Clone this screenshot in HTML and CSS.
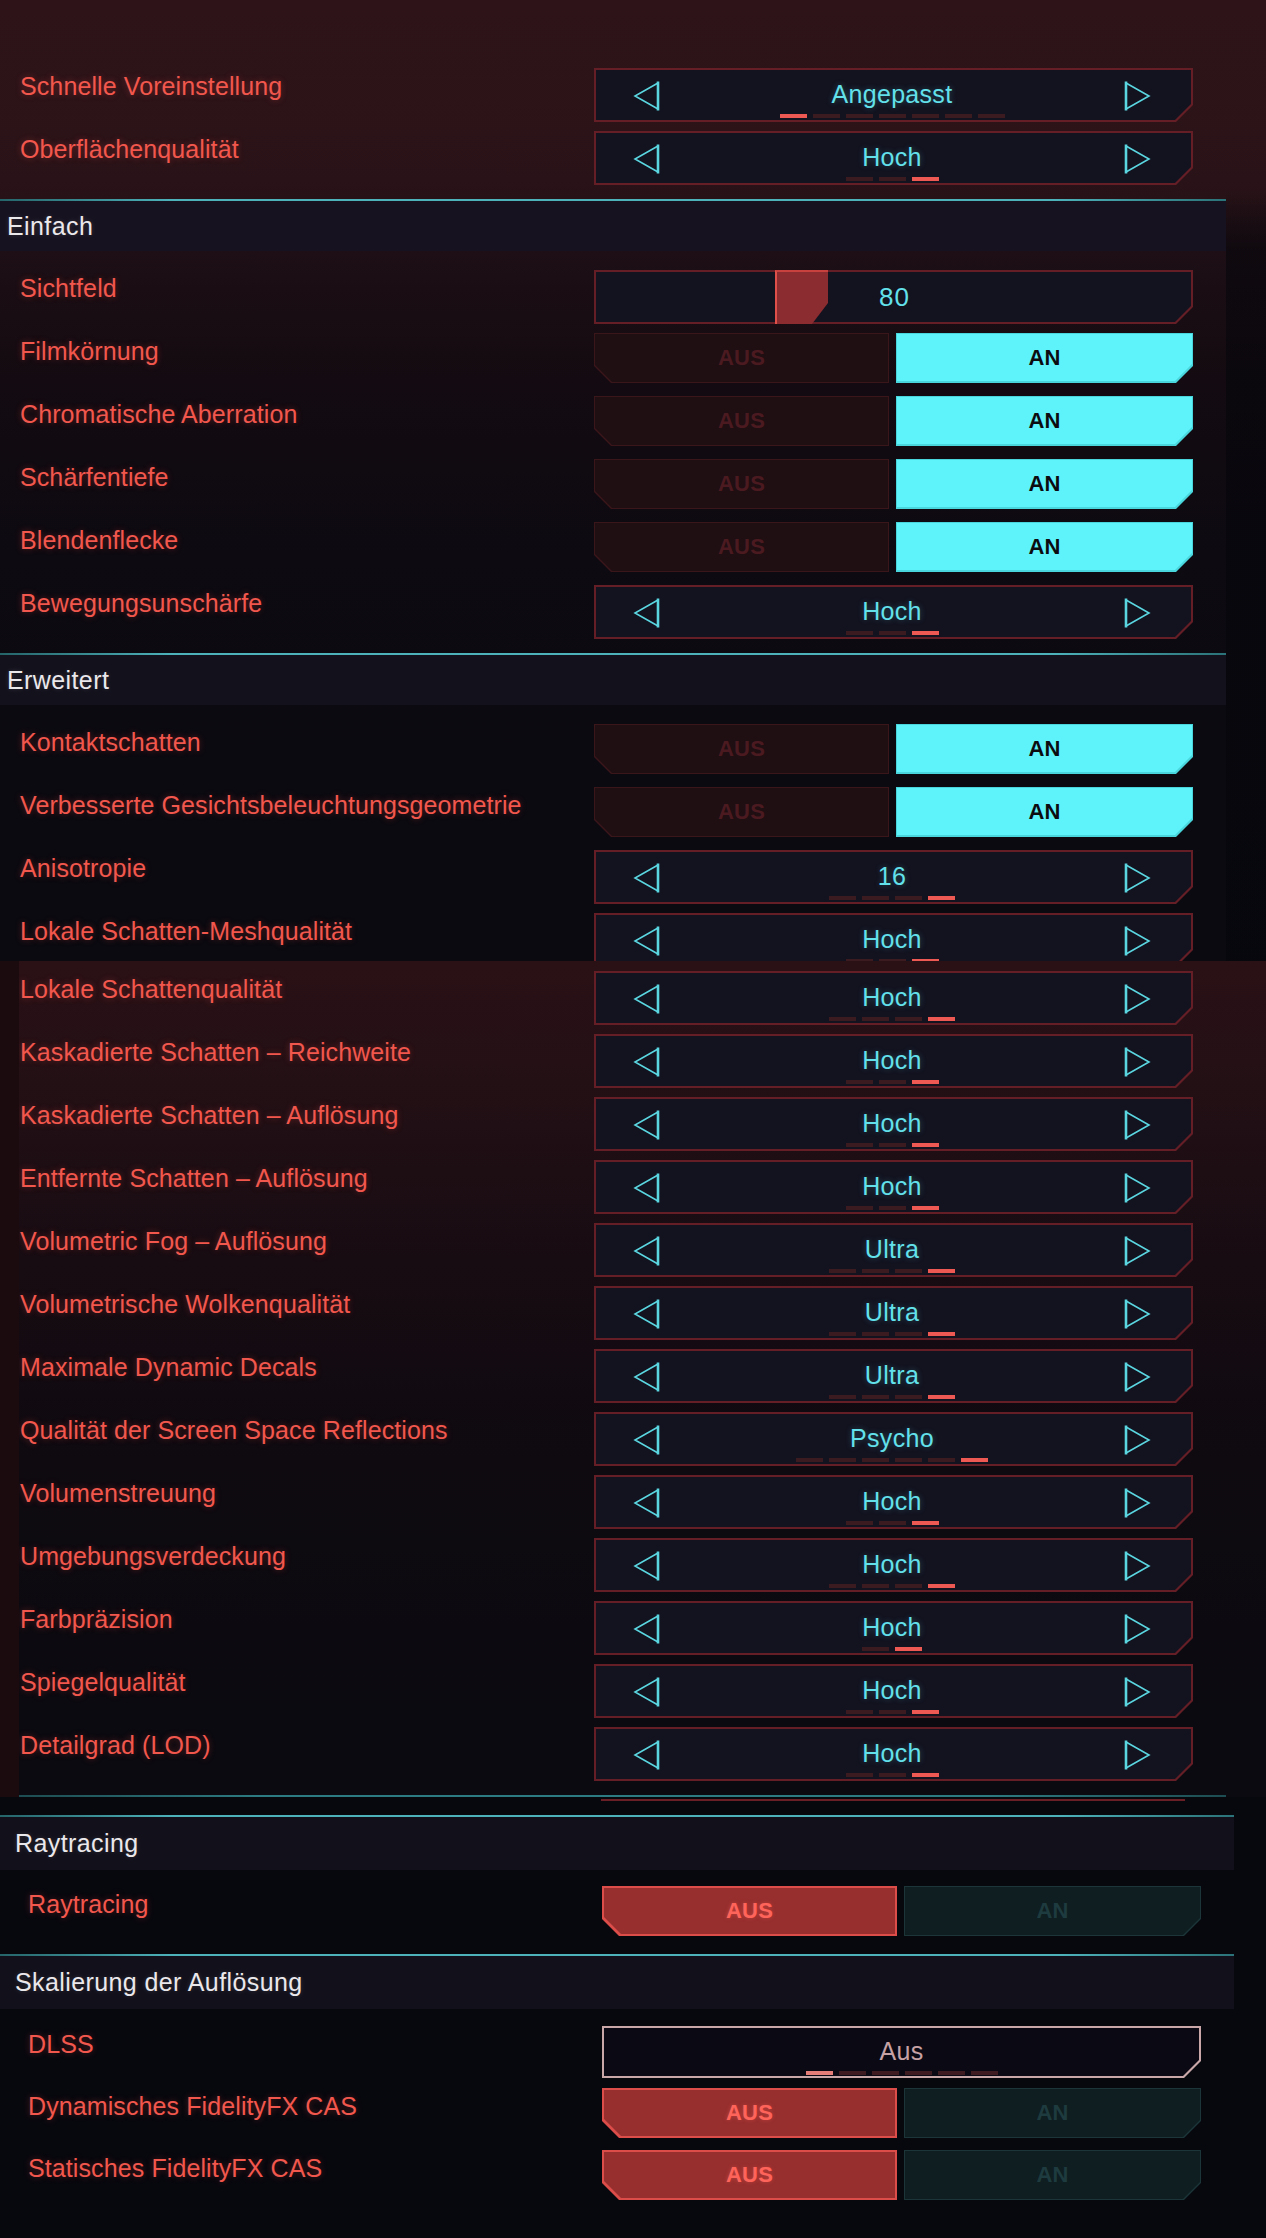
FILE: index.html
```html
<!DOCTYPE html>
<html lang="de">
<head>
<meta charset="utf-8">
<title>Grafik</title>
<link rel="stylesheet" href="styles.css">
</head>
<body>
<div class="screen">

<section class="part part-top">
  <div class="rows rows-first">
    <div class="row">
      <div class="lbl">Schnelle Voreinstellung</div>
      <div class="ctl sel">
        <svg class="arr arr-l" width="27" height="30" viewBox="0 0 27 30"><path d="M25 2 L2 15 L25 28" /><path class="bar" d="M25 0.5 V29.5" /></svg>
        <div class="val"><div class="txt">Angepasst</div><div class="dots"><i class="on"></i><i></i><i></i><i></i><i></i><i></i><i></i></div></div>
        <svg class="arr arr-r" width="27" height="30" viewBox="0 0 27 30"><path d="M2 2 L25 15 L2 28" /><path class="bar" d="M2 0.5 V29.5" /></svg>
      </div>
    </div>
    <div class="row">
      <div class="lbl">Oberflächenqualität</div>
      <div class="ctl sel">
        <svg class="arr arr-l" width="27" height="30" viewBox="0 0 27 30"><path d="M25 2 L2 15 L25 28" /><path class="bar" d="M25 0.5 V29.5" /></svg>
        <div class="val"><div class="txt">Hoch</div><div class="dots"><i></i><i></i><i class="on"></i></div></div>
        <svg class="arr arr-r" width="27" height="30" viewBox="0 0 27 30"><path d="M2 2 L25 15 L2 28" /><path class="bar" d="M2 0.5 V29.5" /></svg>
      </div>
    </div>
  </div>

  <div class="head head-top"><span>Einfach</span></div>

  <div class="rows rows-sec">
    <div class="row">
      <div class="lbl">Sichtfeld</div>
      <div class="ctl sld">
        <div class="knob" style="left:181px"></div>
        <span class="sv">80</span>
      </div>
    </div>
    <div class="row">
      <div class="lbl">Filmkörnung</div>
      <div class="tog"><div class="t t-l off-red"><span>AUS</span></div><div class="t t-r on-cyan"><span>AN</span></div></div>
    </div>
    <div class="row">
      <div class="lbl">Chromatische Aberration</div>
      <div class="tog"><div class="t t-l off-red"><span>AUS</span></div><div class="t t-r on-cyan"><span>AN</span></div></div>
    </div>
    <div class="row">
      <div class="lbl">Schärfentiefe</div>
      <div class="tog"><div class="t t-l off-red"><span>AUS</span></div><div class="t t-r on-cyan"><span>AN</span></div></div>
    </div>
    <div class="row">
      <div class="lbl">Blendenflecke</div>
      <div class="tog"><div class="t t-l off-red"><span>AUS</span></div><div class="t t-r on-cyan"><span>AN</span></div></div>
    </div>
    <div class="row">
      <div class="lbl">Bewegungsunschärfe</div>
      <div class="ctl sel">
        <svg class="arr arr-l" width="27" height="30" viewBox="0 0 27 30"><path d="M25 2 L2 15 L25 28" /><path class="bar" d="M25 0.5 V29.5" /></svg>
        <div class="val"><div class="txt">Hoch</div><div class="dots"><i></i><i></i><i class="on"></i></div></div>
        <svg class="arr arr-r" width="27" height="30" viewBox="0 0 27 30"><path d="M2 2 L25 15 L2 28" /><path class="bar" d="M2 0.5 V29.5" /></svg>
      </div>
    </div>
  </div>

  <div class="head head-mid"><span>Erweitert</span></div>

  <div class="rows rows-sec">
    <div class="row">
      <div class="lbl">Kontaktschatten</div>
      <div class="tog"><div class="t t-l off-red"><span>AUS</span></div><div class="t t-r on-cyan"><span>AN</span></div></div>
    </div>
    <div class="row">
      <div class="lbl">Verbesserte Gesichtsbeleuchtungsgeometrie</div>
      <div class="tog"><div class="t t-l off-red"><span>AUS</span></div><div class="t t-r on-cyan"><span>AN</span></div></div>
    </div>
    <div class="row">
      <div class="lbl">Anisotropie</div>
      <div class="ctl sel">
        <svg class="arr arr-l" width="27" height="30" viewBox="0 0 27 30"><path d="M25 2 L2 15 L25 28" /><path class="bar" d="M25 0.5 V29.5" /></svg>
        <div class="val"><div class="txt">16</div><div class="dots"><i></i><i></i><i></i><i class="on"></i></div></div>
        <svg class="arr arr-r" width="27" height="30" viewBox="0 0 27 30"><path d="M2 2 L25 15 L2 28" /><path class="bar" d="M2 0.5 V29.5" /></svg>
      </div>
    </div>
    <div class="row">
      <div class="lbl">Lokale Schatten-Meshqualität</div>
      <div class="ctl sel">
        <svg class="arr arr-l" width="27" height="30" viewBox="0 0 27 30"><path d="M25 2 L2 15 L25 28" /><path class="bar" d="M25 0.5 V29.5" /></svg>
        <div class="val"><div class="txt">Hoch</div><div class="dots"><i></i><i></i><i class="on"></i></div></div>
        <svg class="arr arr-r" width="27" height="30" viewBox="0 0 27 30"><path d="M2 2 L25 15 L2 28" /><path class="bar" d="M2 0.5 V29.5" /></svg>
      </div>
    </div>
  </div>
</section>

<section class="part part-mid">
  <div class="rows rows-stitch">
    <div class="row"><div class="lbl">Lokale Schattenqualität</div>
      <div class="ctl sel"><svg class="arr arr-l" width="27" height="30" viewBox="0 0 27 30"><path d="M25 2 L2 15 L25 28" /><path class="bar" d="M25 0.5 V29.5" /></svg>
        <div class="val"><div class="txt">Hoch</div><div class="dots"><i></i><i></i><i></i><i class="on"></i></div></div>
        <svg class="arr arr-r" width="27" height="30" viewBox="0 0 27 30"><path d="M2 2 L25 15 L2 28" /><path class="bar" d="M2 0.5 V29.5" /></svg></div></div>
    <div class="row"><div class="lbl">Kaskadierte Schatten – Reichweite</div>
      <div class="ctl sel"><svg class="arr arr-l" width="27" height="30" viewBox="0 0 27 30"><path d="M25 2 L2 15 L25 28" /><path class="bar" d="M25 0.5 V29.5" /></svg>
        <div class="val"><div class="txt">Hoch</div><div class="dots"><i></i><i></i><i class="on"></i></div></div>
        <svg class="arr arr-r" width="27" height="30" viewBox="0 0 27 30"><path d="M2 2 L25 15 L2 28" /><path class="bar" d="M2 0.5 V29.5" /></svg></div></div>
    <div class="row"><div class="lbl">Kaskadierte Schatten – Auflösung</div>
      <div class="ctl sel"><svg class="arr arr-l" width="27" height="30" viewBox="0 0 27 30"><path d="M25 2 L2 15 L25 28" /><path class="bar" d="M25 0.5 V29.5" /></svg>
        <div class="val"><div class="txt">Hoch</div><div class="dots"><i></i><i></i><i class="on"></i></div></div>
        <svg class="arr arr-r" width="27" height="30" viewBox="0 0 27 30"><path d="M2 2 L25 15 L2 28" /><path class="bar" d="M2 0.5 V29.5" /></svg></div></div>
    <div class="row"><div class="lbl">Entfernte Schatten – Auflösung</div>
      <div class="ctl sel"><svg class="arr arr-l" width="27" height="30" viewBox="0 0 27 30"><path d="M25 2 L2 15 L25 28" /><path class="bar" d="M25 0.5 V29.5" /></svg>
        <div class="val"><div class="txt">Hoch</div><div class="dots"><i></i><i></i><i class="on"></i></div></div>
        <svg class="arr arr-r" width="27" height="30" viewBox="0 0 27 30"><path d="M2 2 L25 15 L2 28" /><path class="bar" d="M2 0.5 V29.5" /></svg></div></div>
    <div class="row"><div class="lbl">Volumetric Fog – Auflösung</div>
      <div class="ctl sel"><svg class="arr arr-l" width="27" height="30" viewBox="0 0 27 30"><path d="M25 2 L2 15 L25 28" /><path class="bar" d="M25 0.5 V29.5" /></svg>
        <div class="val"><div class="txt">Ultra</div><div class="dots"><i></i><i></i><i></i><i class="on"></i></div></div>
        <svg class="arr arr-r" width="27" height="30" viewBox="0 0 27 30"><path d="M2 2 L25 15 L2 28" /><path class="bar" d="M2 0.5 V29.5" /></svg></div></div>
    <div class="row"><div class="lbl">Volumetrische Wolkenqualität</div>
      <div class="ctl sel"><svg class="arr arr-l" width="27" height="30" viewBox="0 0 27 30"><path d="M25 2 L2 15 L25 28" /><path class="bar" d="M25 0.5 V29.5" /></svg>
        <div class="val"><div class="txt">Ultra</div><div class="dots"><i></i><i></i><i></i><i class="on"></i></div></div>
        <svg class="arr arr-r" width="27" height="30" viewBox="0 0 27 30"><path d="M2 2 L25 15 L2 28" /><path class="bar" d="M2 0.5 V29.5" /></svg></div></div>
    <div class="row"><div class="lbl">Maximale Dynamic Decals</div>
      <div class="ctl sel"><svg class="arr arr-l" width="27" height="30" viewBox="0 0 27 30"><path d="M25 2 L2 15 L25 28" /><path class="bar" d="M25 0.5 V29.5" /></svg>
        <div class="val"><div class="txt">Ultra</div><div class="dots"><i></i><i></i><i></i><i class="on"></i></div></div>
        <svg class="arr arr-r" width="27" height="30" viewBox="0 0 27 30"><path d="M2 2 L25 15 L2 28" /><path class="bar" d="M2 0.5 V29.5" /></svg></div></div>
    <div class="row"><div class="lbl">Qualität der Screen Space Reflections</div>
      <div class="ctl sel"><svg class="arr arr-l" width="27" height="30" viewBox="0 0 27 30"><path d="M25 2 L2 15 L25 28" /><path class="bar" d="M25 0.5 V29.5" /></svg>
        <div class="val"><div class="txt">Psycho</div><div class="dots"><i></i><i></i><i></i><i></i><i></i><i class="on"></i></div></div>
        <svg class="arr arr-r" width="27" height="30" viewBox="0 0 27 30"><path d="M2 2 L25 15 L2 28" /><path class="bar" d="M2 0.5 V29.5" /></svg></div></div>
    <div class="row"><div class="lbl">Volumenstreuung</div>
      <div class="ctl sel"><svg class="arr arr-l" width="27" height="30" viewBox="0 0 27 30"><path d="M25 2 L2 15 L25 28" /><path class="bar" d="M25 0.5 V29.5" /></svg>
        <div class="val"><div class="txt">Hoch</div><div class="dots"><i></i><i></i><i class="on"></i></div></div>
        <svg class="arr arr-r" width="27" height="30" viewBox="0 0 27 30"><path d="M2 2 L25 15 L2 28" /><path class="bar" d="M2 0.5 V29.5" /></svg></div></div>
    <div class="row"><div class="lbl">Umgebungsverdeckung</div>
      <div class="ctl sel"><svg class="arr arr-l" width="27" height="30" viewBox="0 0 27 30"><path d="M25 2 L2 15 L25 28" /><path class="bar" d="M25 0.5 V29.5" /></svg>
        <div class="val"><div class="txt">Hoch</div><div class="dots"><i></i><i></i><i></i><i class="on"></i></div></div>
        <svg class="arr arr-r" width="27" height="30" viewBox="0 0 27 30"><path d="M2 2 L25 15 L2 28" /><path class="bar" d="M2 0.5 V29.5" /></svg></div></div>
    <div class="row"><div class="lbl">Farbpräzision</div>
      <div class="ctl sel"><svg class="arr arr-l" width="27" height="30" viewBox="0 0 27 30"><path d="M25 2 L2 15 L25 28" /><path class="bar" d="M25 0.5 V29.5" /></svg>
        <div class="val"><div class="txt">Hoch</div><div class="dots"><i></i><i class="on"></i></div></div>
        <svg class="arr arr-r" width="27" height="30" viewBox="0 0 27 30"><path d="M2 2 L25 15 L2 28" /><path class="bar" d="M2 0.5 V29.5" /></svg></div></div>
    <div class="row"><div class="lbl">Spiegelqualität</div>
      <div class="ctl sel"><svg class="arr arr-l" width="27" height="30" viewBox="0 0 27 30"><path d="M25 2 L2 15 L25 28" /><path class="bar" d="M25 0.5 V29.5" /></svg>
        <div class="val"><div class="txt">Hoch</div><div class="dots"><i></i><i></i><i class="on"></i></div></div>
        <svg class="arr arr-r" width="27" height="30" viewBox="0 0 27 30"><path d="M2 2 L25 15 L2 28" /><path class="bar" d="M2 0.5 V29.5" /></svg></div></div>
    <div class="row"><div class="lbl">Detailgrad (LOD)</div>
      <div class="ctl sel"><svg class="arr arr-l" width="27" height="30" viewBox="0 0 27 30"><path d="M25 2 L2 15 L25 28" /><path class="bar" d="M25 0.5 V29.5" /></svg>
        <div class="val"><div class="txt">Hoch</div><div class="dots"><i></i><i></i><i class="on"></i></div></div>
        <svg class="arr arr-r" width="27" height="30" viewBox="0 0 27 30"><path d="M2 2 L25 15 L2 28" /><path class="bar" d="M2 0.5 V29.5" /></svg></div></div>
  </div>
  <div class="cutline"></div>
</section>

<section class="part part-bottom">
  <div class="remnant"></div>
  <div class="head head-low head-rt"><span>Raytracing</span></div>
  <div class="rows rows-low rows-rt">
    <div class="row row-low">
      <div class="lbl">Raytracing</div>
      <div class="tog"><div class="t t-l on-red"><span>AUS</span></div><div class="t t-r off-teal"><span>AN</span></div></div>
    </div>
  </div>
  <div class="head head-low"><span>Skalierung der Auflösung</span></div>
  <div class="rows rows-low rows-sk">
    <div class="row row-low">
      <div class="lbl">DLSS</div>
      <div class="ctl sel sel-hl">
        <div class="val"><div class="txt">Aus</div><div class="dots"><i class="on"></i><i></i><i></i><i></i><i></i><i></i></div></div>
      </div>
    </div>
    <div class="row row-low">
      <div class="lbl">Dynamisches FidelityFX CAS</div>
      <div class="tog"><div class="t t-l on-red"><span>AUS</span></div><div class="t t-r off-teal"><span>AN</span></div></div>
    </div>
    <div class="row row-low">
      <div class="lbl">Statisches FidelityFX CAS</div>
      <div class="tog"><div class="t t-l on-red"><span>AUS</span></div><div class="t t-r off-teal"><span>AN</span></div></div>
    </div>
  </div>
</section>

</div>
</body>
</html>
```

FILE: styles.css
```css
* { box-sizing: border-box; }

html, body {
  margin: 0;
  padding: 0;
  background: #07080e;
}

body {
  font-family: "Liberation Sans", Arial, sans-serif;
}

.screen {
  width: 1266px;
  height: 2238px;
  overflow: hidden;
}

/* ---------- parts (stitched screenshots) ---------- */
.part-top {
  height: 961px;
  overflow: hidden;
  background:
    linear-gradient(180deg, rgba(4,5,10,0) 0px, rgba(4,5,10,0.55) 60px) 1226px 190px / 40px 771px no-repeat,
    linear-gradient(180deg, #2e1419 0px, #2a1318 180px, #1d0f15 250px, #130b11 380px, #0d0a11 560px, #0a0a10 961px);
}

.part-mid {
  height: 836px;
  overflow: hidden;
  border-left: 19px solid #1b0b0f;
  background: linear-gradient(180deg, #2a1116 0px, #231015 120px, #170c12 300px, #0e0a10 500px, #0a0a10 836px);
}

.part-bottom {
  height: 441px;
  padding-left: 8px;
  background: #07080e;
}

/* ---------- rows ---------- */
.rows-first { padding-top: 68px; padding-bottom: 5px; }
.rows-sec { padding-top: 19px; padding-bottom: 5px; }
.rows-stitch { padding-top: 10px; margin-left: -19px; }
.rows-rt { padding-top: 16px; padding-bottom: 6px; }
.rows-sk { padding-top: 17px; }

.row {
  display: flex;
  align-items: flex-start;
  height: 63px;
}
.row-low { height: 62px; }

.lbl {
  flex: 0 0 594px;
  min-width: 0;
  padding-left: 20px;
  margin-top: 2px;
  font-size: 25px;
  line-height: 32px;
  letter-spacing: 0.1px;
  color: #f2574d;
  text-shadow: 0 0 6px rgba(240, 70, 60, 0.35);
  white-space: nowrap;
}

/* ---------- section headers ---------- */
.head {
  width: 1226px;
  height: 52px;
  display: flex;
  align-items: center;
  padding-left: 7px;
  background:
    linear-gradient(90deg, #25656a 0%, #4db2ba 14%, #4db2ba 86%, #2b7378 100%) top / 100% 2px no-repeat,
    #17121f;
}
.head span {
  font-size: 25px;
  letter-spacing: 0.4px;
  color: #ebe8ec;
  text-shadow: 0 0 5px rgba(255,255,255,0.15);
  padding-top: 2px;
}
.head-mid { background-color: #13111c; }
.head-low {
  width: 1234px;
  height: 55px;
  margin-left: -8px;
  padding-left: 15px;
  background-color: #12111b;
}
.head-rt { margin-top: 14px; }

.cutline {
  margin-top: 5px;
  width: 1207px;
  height: 2px;
  background: linear-gradient(90deg, #1d4d52, #2d7b82 20%, #2d7b82 80%, #1d4d52);
}

.remnant {
  margin-top: 2px;
  margin-left: 593px;
  width: 584px;
  height: 2px;
  background: #6a1f27;
}

/* ---------- controls ---------- */
.ctl {
  position: relative;
  flex: none;
  width: 599px;
  height: 54px;
}

.sel {
  display: flex;
  align-items: flex-start;
  background: #661e26;
  clip-path: polygon(0 0, 100% 0, 100% calc(100% - 17px), calc(100% - 17px) 100%, 0 100%);
}
.sel::before {
  content: "";
  position: absolute;
  inset: 2px;
  background: #13121f;
  clip-path: polygon(0 0, 100% 0, 100% calc(100% - 16px), calc(100% - 16px) 100%, 0 100%);
}
.sel > * { position: relative; }

.arr { flex: none; }
.arr path {
  fill: none;
  stroke: #5ad6e0;
  stroke-width: 1.6;
  stroke-linejoin: miter;
}
.arr path.bar { stroke-width: 2.6; }
.arr-l { margin: 13px 0 0 39px; }
.arr-r { margin: 13px 42px 0 0; }

.val {
  flex: 1;
  padding-top: 11px;
  text-align: center;
}
.txt {
  font-size: 25px;
  line-height: 30px;
  letter-spacing: 0.3px;
  color: #63e1eb;
  text-shadow: 0 0 6px rgba(90, 220, 235, 0.3);
}
.dots {
  display: flex;
  justify-content: center;
  gap: 6px;
  margin-top: 5px;
}
.dots i {
  display: block;
  width: 27px;
  height: 4px;
  background: #3b1a20;
}
.dots i.on { background: #ee5a53; }

/* highlighted (hovered) select: DLSS */
.sel-hl { background: #c9a6a8; height: 52px; }
.sel-hl::before { background: #0b0a14; }
.sel-hl .val { padding-top: 10px; }
.sel-hl .txt { color: #c7a2a4; text-shadow: none; }
.sel-hl .dots i { background: #3d1b21; }
.sel-hl .dots i.on { background: #e47d77; }

/* slider */
.sld {
  display: flex;
  align-items: center;
  justify-content: center;
  background: #661e26;
  clip-path: polygon(0 0, 100% 0, 100% calc(100% - 17px), calc(100% - 17px) 100%, 0 100%);
}
.sld::before {
  content: "";
  position: absolute;
  inset: 2px;
  background: #13121f;
  clip-path: polygon(0 0, 100% 0, 100% calc(100% - 16px), calc(100% - 16px) 100%, 0 100%);
}
.knob {
  position: absolute;
  top: 0;
  bottom: 0;
  width: 53px;
  background: #8b2c30;
  border-left: 2px solid #e0504b;
  border-top: 2px solid #c8413f;
  clip-path: polygon(0 0, 100% 0, 100% 33px, calc(100% - 16px) 100%, 0 100%);
}
.sv {
  position: relative;
  font-size: 26px;
  letter-spacing: 1px;
  color: #63e1eb;
  padding-left: 2px;
}

/* toggles */
.tog {
  display: flex;
  gap: 7px;
  flex: none;
  width: 599px;
}
.t {
  position: relative;
  height: 50px;
  display: flex;
  align-items: center;
  justify-content: center;
  font-weight: 700;
  font-size: 22px;
  line-height: 22px;
  letter-spacing: 0.2px;
}
.t-l { width: 295px; clip-path: polygon(0 0, 100% 0, 100% 100%, 17px 100%, 0 calc(100% - 17px)); }
.t-r { width: 297px; clip-path: polygon(0 0, 100% 0, 100% calc(100% - 17px), calc(100% - 17px) 100%, 0 100%); }
.t::before {
  content: "";
  position: absolute;
  inset: 1px;
  clip-path: inherit;
}
.t span { position: relative; }

.off-red { background: #3a151a; color: #4b1a20; }
.off-red::before { background: #1f0e12; }

.on-cyan { background: #49d6dd; color: #0b0b10; }
.on-cyan::before { background: #5ef3fb; inset: 1px 1px 2px 1px; }

.on-red { background: #dc4c48; color: #ff645b; }
.on-red::before { background: #962f2e; inset: 2px; }
.on-red span { text-shadow: 0 0 4px rgba(255, 90, 80, 0.4); }

.off-teal { background: #1b3538; color: #1e3b3f; }
.off-teal::before { background: #0f1e21; }
```
